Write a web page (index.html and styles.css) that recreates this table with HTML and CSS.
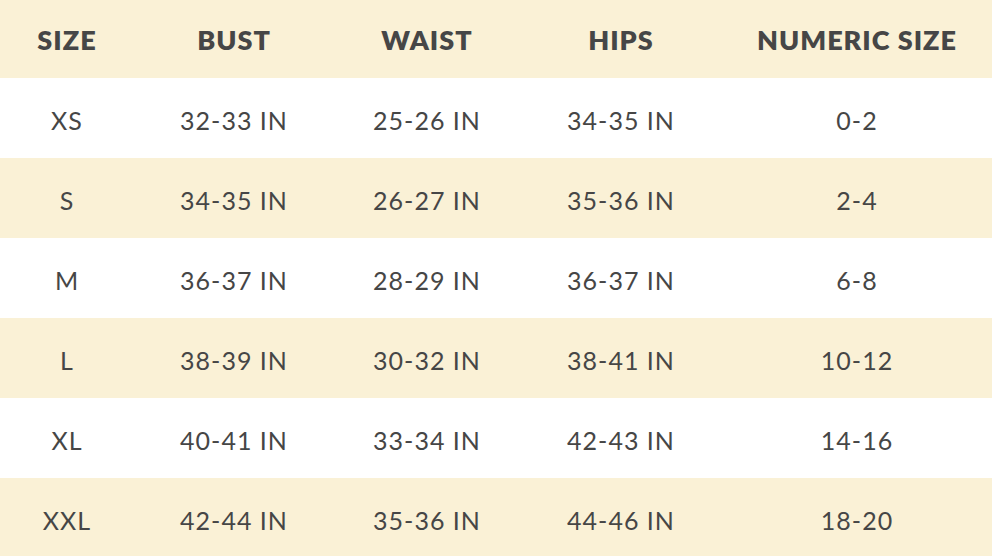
FILE: index.html
```html
<!DOCTYPE html>
<html>
<head>
<meta charset="utf-8">
<link rel="stylesheet" href="styles.css">
</head>
<body>
<table class="size-table">
  <colgroup>
    <col class="c1"><col class="c2"><col class="c3"><col class="c4"><col class="c5">
  </colgroup>
  <thead>
    <tr><th>SIZE</th><th>BUST</th><th>WAIST</th><th>HIPS</th><th>NUMERIC SIZE</th></tr>
  </thead>
  <tbody>
    <tr><td>XS</td><td>32-33 IN</td><td>25-26 IN</td><td>34-35 IN</td><td>0-2</td></tr>
    <tr class="alt"><td>S</td><td>34-35 IN</td><td>26-27 IN</td><td>35-36 IN</td><td>2-4</td></tr>
    <tr><td>M</td><td>36-37 IN</td><td>28-29 IN</td><td>36-37 IN</td><td>6-8</td></tr>
    <tr class="alt"><td>L</td><td>38-39 IN</td><td>30-32 IN</td><td>38-41 IN</td><td>10-12</td></tr>
    <tr><td>XL</td><td>40-41 IN</td><td>33-34 IN</td><td>42-43 IN</td><td>14-16</td></tr>
    <tr class="alt"><td>XXL</td><td>42-44 IN</td><td>35-36 IN</td><td>44-46 IN</td><td>18-20</td></tr>
  </tbody>
</table>
</body>
</html>
```
FILE: styles.css
```css
html, body {
  margin: 0;
  padding: 0;
  background: #ffffff;
}
.size-table {
  width: 992px;
  border-collapse: collapse;
  table-layout: fixed;
  font-family: "Lato", "Noto Sans", sans-serif;
  color: #464646;
}
.c1 { width: 134px; }
.c2 { width: 200px; }
.c3 { width: 186px; }
.c4 { width: 202px; }
.c5 { width: 270px; }
.size-table thead tr {
  background: #faf1d6;
  height: 78px;
}
.size-table th {
  font-weight: 800;
  font-size: 27px;
  letter-spacing: 1px;
  text-align: center;
  padding: 0;
}
.size-table tbody tr {
  height: 80px;
}
.size-table tbody tr.alt {
  background: #faf1d6;
}
.size-table td {
  font-size: 25px;
  font-weight: 400;
  text-align: center;
  padding: 3px 0 0 0;
  letter-spacing: 1px;
}
```
